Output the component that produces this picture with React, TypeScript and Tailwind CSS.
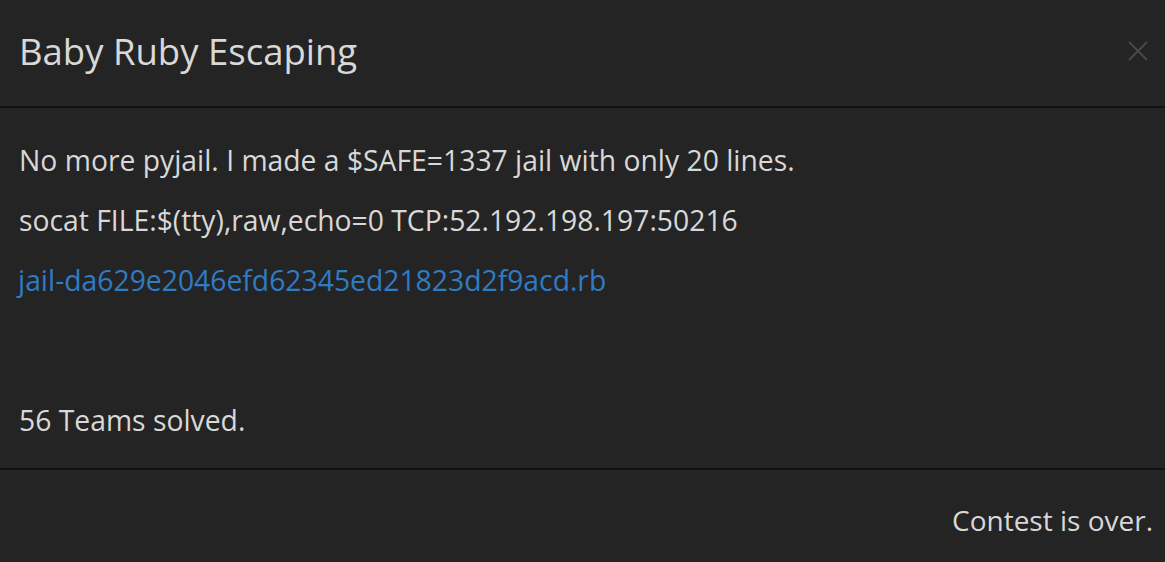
import React from "react";

export default function App() {
  return (
    <div
      className="w-[1165px] h-[562px] bg-[#242424] text-[#d8d8d8] overflow-hidden flex flex-col"
      style={{ fontFamily: '"Open Sans", "Noto Sans", sans-serif' }}
    >
      <div className="h-[106px] flex items-center justify-between pl-[19px] pr-[16px] shrink-0">
        <h4 className="text-[36.5px] leading-[44px] text-[#d8d8d8] pb-[4px]">Baby Ruby Escaping</h4>
        <button className="w-[22px] h-[20px] text-[#4a4a4a] mb-[4px]">
          <svg viewBox="0 0 22 20" width="22" height="20" fill="none" stroke="currentColor" strokeWidth="1.8">
            <path d="M2 1 L20 19 M20 1 L2 19" />
          </svg>
        </button>
      </div>
      <div className="h-[2px] bg-[#111111] shrink-0" />
      <div className="pl-[19px] pt-[32px] pb-[28px] text-[28.3px] leading-[40px] flex flex-col shrink-0">
        <p className="mb-[20px]">No more pyjail. I made a $SAFE=1337 jail with only 20 lines.</p>
        <p className="mb-[20px]">socat FILE:$(tty),raw,echo=0 TCP:52.192.198.197:50216</p>
        <p className="mb-[100px]">
          <a className="text-[#2f7bc4] -ml-[1px]">jail-da629e2046efd62345ed21823d2f9acd.rb</a>
        </p>
        <p>56 Teams solved.</p>
      </div>
      <div className="h-[2px] bg-[#111111] shrink-0" />
      <div className="flex-1 flex items-center justify-end pr-[12px] pt-[8px] text-[28px] leading-[40px]">
        <span>Contest is over.</span>
      </div>
    </div>
  );
}
